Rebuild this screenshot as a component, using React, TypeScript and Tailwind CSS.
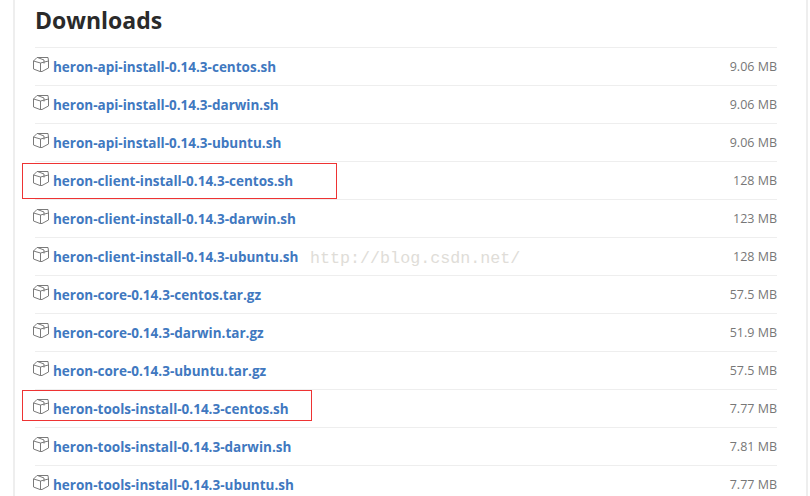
const files = [
  { name: 'heron-api-install-0.14.3-centos.sh', size: '9.06 MB' },
  { name: 'heron-api-install-0.14.3-darwin.sh', size: '9.06 MB' },
  { name: 'heron-api-install-0.14.3-ubuntu.sh', size: '9.06 MB' },
  { name: 'heron-client-install-0.14.3-centos.sh', size: '128 MB', box: 'top-[1px] h-[36px] w-[315px]' },
  { name: 'heron-client-install-0.14.3-darwin.sh', size: '123 MB' },
  { name: 'heron-client-install-0.14.3-ubuntu.sh', size: '128 MB' },
  { name: 'heron-core-0.14.3-centos.tar.gz', size: '57.5 MB' },
  { name: 'heron-core-0.14.3-darwin.tar.gz', size: '51.9 MB' },
  { name: 'heron-core-0.14.3-ubuntu.tar.gz', size: '57.5 MB' },
  { name: 'heron-tools-install-0.14.3-centos.sh', size: '7.77 MB', box: 'top-[0px] h-[31px] w-[290px]' },
  { name: 'heron-tools-install-0.14.3-darwin.sh', size: '7.81 MB' },
  { name: 'heron-tools-install-0.14.3-ubuntu.sh', size: '7.77 MB' },
];

const BoxIcon = () => (
  <svg width="16" height="15" viewBox="0 0 16 15" fill="none" stroke="#7a7a7a" strokeWidth="1" className="block">
    <path d="M0.5 4 L4 0.5 H15 L15.5 4 V11 L9 14.5 H7 L0.5 12 Z" />
    <path d="M0.5 4 L7.5 6 L15.5 4" />
    <path d="M7.5 6 V14.5" />
    <path d="M4.5 0.5 L11 3 V6.5" />
  </svg>
);

const App = () => {
  return (
    <div className="relative h-[496px] w-[810px] overflow-hidden bg-white font-['Open_Sans',sans-serif]">
      <div className="ml-[13px] mr-[2px] h-full border-x-2 border-[#eeeeee] pl-[20px] pr-[29px]">
        <h2 className="h-[47px] pt-[4px] text-[23px] leading-[32px] font-bold text-[#2a2a2a]">Downloads</h2>
        <ul className="border-t border-[#eeeeee]">
          {files.map((f) => (
            <li key={f.name} className="relative flex h-[38px] items-center justify-between border-b border-[#eeeeee]">
              <div className="flex items-center gap-[4px]">
                <span className="-ml-[2px] -mt-[5px]"><BoxIcon /></span>
                <a href="#" className="mt-[1px] text-[13.5px] font-bold text-[#4078c0]">{f.name}</a>
              </div>
              <span className="mt-[1px] text-[12.5px] text-[#777777]">{f.size}</span>
              {f.box && <div className={`absolute -left-[13px] border border-[#ee3333] ${f.box}`} />}
            </li>
          ))}
        </ul>
      </div>
      <div className="absolute left-[310px] top-[248px] font-['Liberation_Mono',monospace] text-[16.7px] leading-[22px] text-[#e0ddd8]">
        http://blog.csdn.net/
      </div>
    </div>
  );
};

export default App;
